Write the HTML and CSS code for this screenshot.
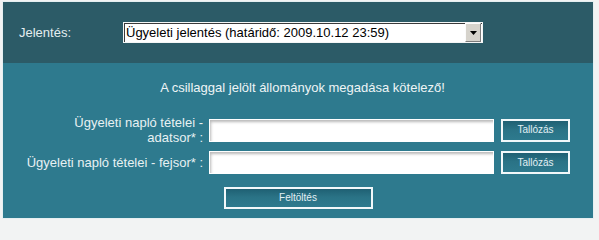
FILE: index.html
```html
<!DOCTYPE html>
<html lang="hu">
<head>
<meta charset="utf-8">
<title>Jelentés feltöltés</title>
<link rel="stylesheet" href="styles.css">
</head>
<body>
<div class="panel">
  <div class="head">
    <span class="head-label">Jelentés:</span>
    <div class="select">
      <span class="select-text">Ügyeleti jelentés (határidő: 2009.10.12 23:59)</span>
      <span class="select-arrow"><svg width="7" height="4" viewBox="0 0 7 4"><path d="M0 0H7L3.5 4Z" fill="#000"/></svg></span>
    </div>
  </div>
  <div class="body">
    <p class="notice">A csillaggal jelölt állományok megadása kötelező!</p>
    <div class="form">
      <label class="lbl">Ügyeleti napló tételei -<br>adatsor* :</label>
      <input class="field" type="text">
      <button class="btn browse" type="button">Tallózás</button>
      <label class="lbl">Ügyeleti napló tételei - fejsor* :</label>
      <input class="field" type="text">
      <button class="btn browse" type="button">Tallózás</button>
    </div>
    <div class="submit-row">
      <button class="btn upload" type="button">Feltöltés</button>
    </div>
  </div>
</div>
</body>
</html>
```

FILE: styles.css
```css
html, body {
  margin: 0;
  padding: 0;
}
body {
  background: #f2f3f3;
  font-family: "Liberation Sans", Arial, sans-serif;
  font-size: 13px;
  width: 599px;
  height: 225px;
  overflow: hidden;
}
.panel {
  margin: 1px 0 0 2px;
  width: 590px;
  border: 1px solid #e6eff1;
}
.head {
  height: 61px;
  background: #2c5b67;
  display: flex;
  align-items: center;
  padding-left: 16px;
  box-sizing: border-box;
}
.head-label {
  width: 104px;
  color: #e4eef0;
  line-height: 15px;
}
.select {
  position: relative;
  width: 360px;
  height: 21px;
  box-sizing: border-box;
  background: #fff;
  border: 1px solid #f4f6f6;
  box-shadow: inset 1px 1px 0 #3a3a3a;
  display: flex;
  align-items: center;
  padding-left: 2px;
  margin-top: 0;
}
.select-text {
  color: #000;
  line-height: 15px;
  white-space: nowrap;
}
.select-arrow {
  position: absolute;
  right: 1px;
  top: 0;
  width: 16px;
  height: 19px;
  box-sizing: border-box;
  background: #d6d3cc;
  border: 1px solid;
  border-color: #fbfbfb #7c7c7c #7c7c7c #fbfbfb;
  display: flex;
  align-items: center;
  justify-content: center;
}
.body {
  background: #2e7a8e;
  height: 155px;
  box-sizing: border-box;
  padding-top: 17px;
}
.notice {
  margin: 0 0 20px 9px;
  text-align: center;
  color: #eef5f6;
  line-height: 15px;
}
.form {
  display: grid;
  grid-template-columns: 206px 292px 69px;
  grid-template-rows: 30px 23px;
  row-gap: 6px;
  align-items: center;
}
.lbl {
  text-align: right;
  padding-right: 6px;
  color: #e8f1f3;
  line-height: 15px;
}
.field {
  width: 285px;
  height: 23px;
  box-sizing: border-box;
  margin: 0;
  border: 1px solid #fff;
  background: #fff;
  box-shadow: inset 2px 3px 3px -1px #b9b9b9;
  padding: 0 3px;
  font: inherit;
  outline: none;
}
.btn {
  margin: 0;
  padding: 0;
  box-sizing: border-box;
  border: 2px solid #f2f8fa;
  background: linear-gradient(#1f6073, #2a7386 45%, #2e7a8e);
  color: #e2f0f4;
  font-family: "Liberation Sans", Arial, sans-serif;
  font-size: 10px;
  line-height: 12px;
  cursor: pointer;
}
.browse {
  width: 69px;
  height: 23px;
}
.submit-row {
  display: flex;
  justify-content: center;
  margin-top: 13px;
}
.upload {
  width: 149px;
  height: 22px;
}
```
